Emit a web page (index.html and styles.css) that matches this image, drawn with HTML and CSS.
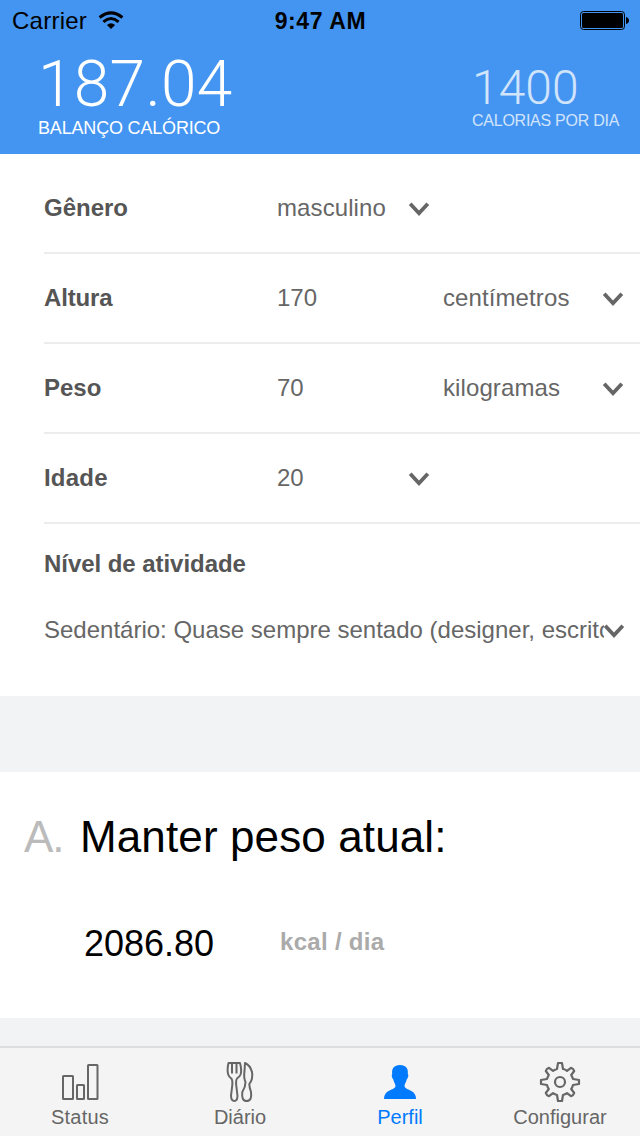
FILE: index.html
```html
<!DOCTYPE html>
<html lang="pt">
<head>
<meta charset="utf-8">
<title>Perfil</title>
<link rel="stylesheet" href="styles.css">
</head>
<body>
<svg class="defs" width="0" height="0"><symbol id="chevron" viewBox="0 0 22 20"><path d="M2.200 5.700 11 15.300l8.800-9.600" fill="none" stroke="#666" stroke-width="3.800"/></symbol></svg>
<div class="app">
  <header class="header">
    <div class="status-bar">
      <div class="carrier"><span class="carrier-name">Carrier</span>
        <svg class="wifi" width="26" height="20" viewBox="0 0 26 20"><g fill="none" stroke="#000" stroke-width="3"><path d="M1.600 6.500Q13-2.800 24.400 6.500"/><path d="M5.400 10.800Q13 4.200 20.600 10.800"/></g><path d="M13 18 8.900 13.900Q13 10.700 17.100 13.900Z"/></svg>
      </div>
      <span class="time">9:47 AM</span>
      <svg class="battery" width="50" height="20" viewBox="0 0 50 20"><rect x="1.500" y=".5" width="44" height="18" rx="3" fill="none" stroke="#000"/><rect x="3" y="2" width="41" height="15" rx="1.500"/><path d="M47 6q3 1 3 3.500T47 13Z"/></svg>
    </div>
    <div class="summary">
      <div class="balance"><div class="balance-value">187.04</div><div class="balance-label">BALANÇO CALÓRICO</div></div>
      <div class="goal"><div class="goal-value">1400</div><div class="goal-label">CALORIAS POR DIA</div></div>
    </div>
  </header>
  <main>
    <section class="form">
      <div class="row"><b class="label genero">Gênero</b><div class="field"><span class="masc">masculino</span><svg class="chevron"><use href="#chevron"/></svg></div></div>
      <div class="row"><b class="label altura">Altura</b><div class="field"><span>170</span></div><div class="field unit"><span class="cm">centímetros</span><svg class="chevron"><use href="#chevron"/></svg></div></div>
      <div class="row"><b class="label peso">Peso</b><div class="field"><span>70</span></div><div class="field unit"><span class="kg">kilogramas</span><svg class="chevron"><use href="#chevron"/></svg></div></div>
      <div class="row"><b class="label idade">Idade</b><div class="field"><span>20</span><svg class="chevron"><use href="#chevron"/></svg></div></div>
      <div class="activity"><b class="label nivel">Nível de atividade</b>
        <div class="select"><span class="select-text">Sedentário: Quase sempre sentado (designer, escritório)</span><svg class="chevron"><use href="#chevron"/></svg></div>
      </div>
    </section>
    <section class="plan">
      <div class="plan-title"><span class="plan-index">A.</span><span class="plan-name">Manter peso atual:</span></div>
      <div class="plan-result"><span class="plan-value">2086.80</span><b class="plan-unit">kcal / dia</b></div>
    </section>
  </main>
  <nav class="tabs">
    <div class="tab"><svg width="44" height="44" viewBox="0 0 44 44"><g fill="none" stroke="#666" stroke-width="2"><rect x="5" y="16" width="10" height="23" rx=".5"/><rect x="19" y="25" width="7" height="14" rx=".5"/><rect x="30" y="5" width="9.500" height="34" rx=".5"/></g></svg><span class="t-status">Status</span></div>
    <div class="tab"><svg width="44" height="44" viewBox="0 0 44 44"><g fill="none" stroke="#666" stroke-width="2" stroke-linejoin="round"><path d="M10.500 3H22Q24 10 22.600 14.500 21.800 16.500 19 18.500 17.800 20 18.200 25L19.500 36Q19.300 41 16.300 41T13 36L14.300 25Q14.700 20 13.300 18.500 11 17 10.200 14.500 8.800 10 10.500 3Z"/><path d="M14 3.500V13.500M18.500 3.500V13.500"/><path d="M27 3Q32 5 34 12 35.300 19 31.300 24 31.300 27 33 32 34.300 41 28.500 41 23.300 41 24.300 32 27.500 27 27.500 22 25.500 18 26.500 11Z"/></g></svg><span class="t-diario">Diário</span></div>
    <div class="tab active"><svg width="44" height="44" viewBox="0 0 44 44"><path fill="#007aff" d="M22 5C16 5 13.500 8.500 14.200 14 13.200 15 14 18 15.300 19.500 15.700 22 17.500 24 17.500 26 17.500 29 12 29.500 9 32Q6 34.500 6 39H38Q38 34.500 35 32C32 29.500 26.500 29 26.500 26 26.500 24 28.300 22 28.700 19.500 30 18 31 15 29.800 14 30.500 8.500 28 5 22 5Z"/></svg><span class="t-perfil">Perfil</span></div>
    <div class="tab"><svg width="44" height="44" viewBox="0 0 44 44"><g fill="none" stroke="#666" stroke-width="2.200" stroke-linejoin="round"><path d="M20 3H24L25 9Q27.500 9.500 29 10.800L33 7.800Q35.500 8.500 36.200 11L33.200 15Q34.400 17 35 19L41 20V24L35 25Q34.400 27.500 33.200 29L36.200 33Q35.500 35.500 33 36.200L29 33.200Q27 34.500 25 35L24 41H20L19 35Q17 34.500 15 33.200L11 36.200Q8.500 35.500 7.800 33L10.800 29Q9.600 27.500 9 25L3 24V20L9 19Q9.600 17 10.800 15L7.800 11Q8.500 8.500 11 7.800L15 10.800Q17 9.500 19 9Z"/><circle cx="22" cy="22" r="5"/></g></svg><span class="t-config">Configurar</span></div>
  </nav>
</div>
</body>
</html>
```
FILE: styles.css
```css
* { box-sizing: border-box; }
body { margin: 0; font-family: "Liberation Sans", Arial, sans-serif; font-size: 24px; line-height: 28px; color: #666; }
.defs { display: block; }
svg { display: block; flex: none; }
span, b { white-space: nowrap; }
.app { width: 640px; height: 1136px; display: flex; flex-direction: column; overflow: hidden; background: #f1f3f5; }
.header { height: 154px; background: #4495f1; color: #fff; }
.status-bar { height: 40px; padding: 1px 11px 0 12px; display: grid; grid-template-columns: 1fr auto 1fr; align-items: center; color: #000; }
.carrier { display: flex; align-items: center; gap: 10px; }
.carrier-name { width: 76px; letter-spacing: .25px; }
.time { font-size: 23px; font-weight: 700; letter-spacing: .6px; }
.battery { justify-self: end; }
.summary { display: flex; justify-content: space-between; padding: 14px 20px 0 38px; }
.balance-value { font: 300 64px/62px Roboto, sans-serif; letter-spacing: .3px; }
.balance-label { font-size: 18px; line-height: 24px; letter-spacing: -.18px; }
.goal { opacity: .75; padding-top: 8px; width: 148px; }
.goal-value { font: 300 48px/51px Roboto, sans-serif; }
.goal-label { font-size: 16px; line-height: 16px; white-space: nowrap; letter-spacing: -.25px; }
.form { height: 542px; background: #fff; padding: 10px 0 0 44px; }
.row { height: 90px; border-bottom: 2px solid #ececec; display: grid; grid-template-columns: 233px 166px 197px; align-items: center; }
.label { color: #555; }
.altura { letter-spacing: -.15px; }
.idade { letter-spacing: .2px; }
.masc, .cm, .kg { letter-spacing: .1px; }
.field { display: flex; align-items: center; justify-content: space-between; padding-right: 13px; }
.unit { padding-right: 16px; }
.chevron { width: 22px; height: 20px; }
.activity { padding: 26px 15px 0 0; }
.label.nivel { display: block; letter-spacing: -.05px; }
.select { display: flex; align-items: center; margin-top: 38px; }
.select-text { flex: 1; min-width: 0; overflow: hidden; margin-right: -1px; }
.plan { height: 246px; margin-top: 76px; background: #fff; padding: 40px 24px 0; color: #000; }
.plan-title { display: flex; font-size: 44px; line-height: 50px; }
.plan-index { width: 56px; color: #bbb; letter-spacing: -1px; }
.plan-name { letter-spacing: .12px; }
.plan-result { display: flex; align-items: center; margin-top: 60px; padding-left: 60px; line-height: 44px; }
.plan-value { font-size: 36px; width: 196px; }
.plan-unit { color: #aaa; line-height: 40px; padding-bottom: 4px; letter-spacing: .3px; }
.tabs { margin-top: auto; height: 90px; background: #f4f4f4; border-top: 2px solid #dcdddf; display: grid; grid-template-columns: repeat(4, 1fr); }
.tab { display: flex; flex-direction: column; align-items: center; padding-top: 12px; font-size: 20px; line-height: 26px; }
.tab.active { color: #007aff; }
.t-status { letter-spacing: .2px; }
```
